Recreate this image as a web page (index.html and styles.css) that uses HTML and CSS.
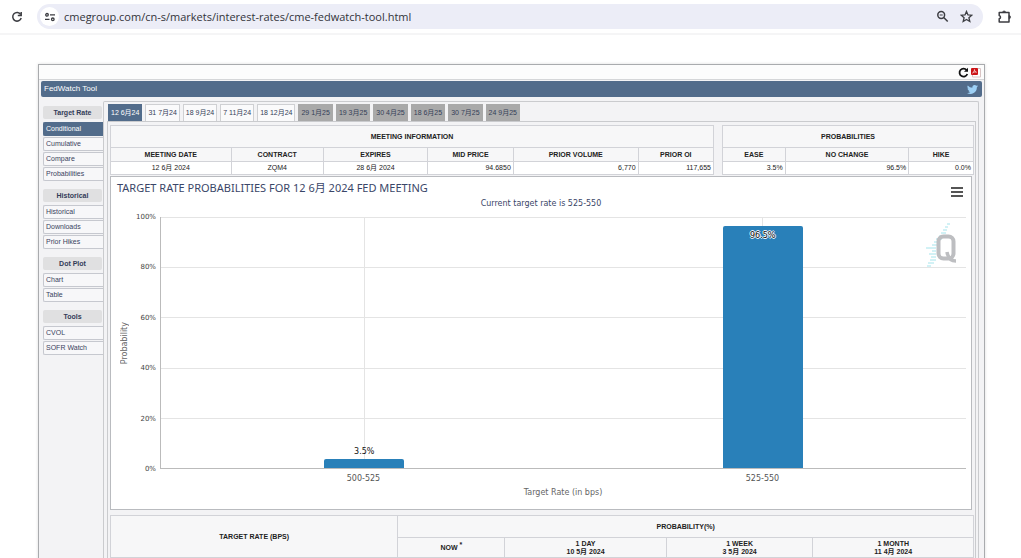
FILE: index.html
```html
<!DOCTYPE html>
<html lang="zh-CN">
<head>
<meta charset="utf-8">
<meta name="viewport" content="width=device-width, initial-scale=1">
<title>CME FedWatch Tool</title>
<link rel="stylesheet" href="styles.css">
</head>
<body>
<header class="browser">
  <button class="icon-btn" aria-label="Reload"><svg width="12" height="12" viewBox="0 0 12 12" fill="none" stroke="#3c3d42" stroke-width="1.5"><path d="M9.7 3.5A4.3 4.3 0 1 0 10.2 7"/><path d="M10.2 1v3.4H6.8"/></svg></button>
  <div class="omnibox">
    <button class="site-info" aria-label="Site information"><svg width="12" height="12" viewBox="0 0 12 12" fill="none" stroke="#3c3d42" stroke-width="1.3"><circle cx="3" cy="3.8" r="1.3"/><path d="M6 3.8h5M1 8.3h4.5"/><circle cx="8.8" cy="8.3" r="1.3"/></svg></button>
    <input class="url" type="text" aria-label="Address" value="cmegroup.com/cn-s/markets/interest-rates/cme-fedwatch-tool.html">
    <button class="icon-btn" aria-label="Zoom"><svg width="13" height="13" viewBox="0 0 13 13" fill="none" stroke="#3c3d42" stroke-width="1.5"><circle cx="5.2" cy="5" r="3.4"/><path d="M7.7 7.5l4 4"/><path d="M3.7 5h3" stroke-width="1"/></svg></button>
    <button class="icon-btn" aria-label="Bookmark"><svg width="13" height="13" viewBox="0 0 13 13" fill="none" stroke="#3c3d42" stroke-width="1.3"><path d="M6.5 1.4l1.5 3.5 3.8.3-2.9 2.5.9 3.8-3.3-2-3.3 2 .9-3.8L1.2 5.2l3.8-.3z"/></svg></button>
  </div>
  <button class="icon-btn" aria-label="Extensions"><svg width="15" height="15" viewBox="0 0 15 15" fill="none" stroke="#3c3d42" stroke-width="1.5"><path d="M2.2 3.5H12V13H2.2V9.8a1.7 1.7 0 0 0 0-3.3z" stroke-linejoin="round"/><path d="M5.500 3.500a1.600 1.600 0 0 1 3.200 0zM12 6.500a1.600 1.600 0 0 1 0 3.200z" fill="#3c3d42" stroke-width=".6"/></svg></button>
</header>

<main class="page">
  <section class="tool">
    <div class="toolbar">
      <button class="icon-btn" aria-label="Refresh"><svg width="11" height="11" viewBox="0 0 11 11" fill="none" stroke="#111" stroke-width="1.8"><path d="M8.6 3A4 4 0 1 0 9.3 7"/><path d="M10 .8v4H6z" fill="#111" stroke="none"/></svg></button>
      <button class="icon-btn" aria-label="PDF"><svg width="11" height="11" viewBox="0 0 11 11"><path d="M3.5 1.5h6v8.500h-8V6" fill="#fff" stroke="#d9c4c4"/><rect width="7" height="7" x="0" y="1" rx="1" fill="#cc1417"/><path d="M1.5 6c2-1 2-3.500 2-3.500s0 2.500 2 2.700c-1.500-.4-3 0-4 .8z" fill="none" stroke="#fff" stroke-width=".6"/></svg></button>
    </div>
    <div class="titlebar">
      <h1>FedWatch Tool</h1>
      <a href="#" aria-label="Twitter"><svg width="11" height="11" viewBox="0 0 24 24" fill="#9dd0f5"><path d="M24 4.600a10 10 0 0 1-2.800.8 5 5 0 0 0 2.200-2.700c-1 .5-2 1-3.100 1.200a4.900 4.900 0 0 0-8.400 4.500A14 14 0 0 1 1.700 3.100a4.900 4.900 0 0 0 1.500 6.600 5 5 0 0 1-2.200-.6 4.900 4.900 0 0 0 4 4.800 5 5 0 0 1-2.200.1 4.900 4.900 0 0 0 4.600 3.400A9.900 9.900 0 0 1 0 19.500 14 14 0 0 0 21.500 7.100 10 10 0 0 0 24 4.600z"/></svg></a>
    </div>
    <div class="body">
      <nav class="sidebar">
        <h2>Target Rate</h2>
        <ul>
          <li><a class="on" href="#">Conditional</a></li>
          <li><a href="#">Cumulative</a></li>
          <li><a href="#">Compare</a></li>
          <li><a href="#">Probabilities</a></li>
        </ul>
        <h2>Historical</h2>
        <ul>
          <li><a href="#">Historical</a></li>
          <li><a href="#">Downloads</a></li>
          <li><a href="#">Prior Hikes</a></li>
        </ul>
        <h2>Dot Plot</h2>
        <ul>
          <li><a href="#">Chart</a></li>
          <li><a href="#">Table</a></li>
        </ul>
        <h2>Tools</h2>
        <ul>
          <li><a href="#">CVOL</a></li>
          <li><a href="#">SOFR Watch</a></li>
        </ul>
      </nav>
      <div class="content">
        <div class="tabs">
          <button class="tab on">12 6月24</button>
          <button class="tab">31 7月24</button>
          <button class="tab">18 9月24</button>
          <button class="tab">7 11月24</button>
          <button class="tab">18 12月24</button>
          <button class="tab far">29 1月25</button>
          <button class="tab far">19 3月25</button>
          <button class="tab far">30 4月25</button>
          <button class="tab far">18 6月25</button>
          <button class="tab far">30 7月25</button>
          <button class="tab far">24 9月25</button>
        </div>
        <div class="view">
          <div class="summary">
            <table class="grid meeting">
              <colgroup><col class="c-date"><col class="c-contract"><col class="c-expires"><col class="c-price"><col class="c-volume"><col class="c-oi"></colgroup>
              <thead>
                <tr class="caption"><th colspan="6">MEETING INFORMATION</th></tr>
                <tr><th>MEETING DATE</th><th>CONTRACT</th><th>EXPIRES</th><th>MID PRICE</th><th>PRIOR VOLUME</th><th>PRIOR OI</th></tr>
              </thead>
              <tbody>
                <tr><td>12 6月 2024</td><td>ZQM4</td><td>28 6月 2024</td><td class="num">94.6850</td><td class="num">6,770</td><td class="num">117,655</td></tr>
              </tbody>
            </table>
            <table class="grid odds">
              <colgroup><col class="c-ease"><col class="c-same"><col class="c-hike"></colgroup>
              <thead>
                <tr class="caption"><th colspan="3">PROBABILITIES</th></tr>
                <tr><th>EASE</th><th>NO CHANGE</th><th>HIKE</th></tr>
              </thead>
              <tbody>
                <tr><td class="num">3.5%</td><td class="num">96.5%</td><td class="num">0.0%</td></tr>
              </tbody>
            </table>
          </div>

          <figure class="chart">
            <div class="chart-head">
              <h3>TARGET RATE PROBABILITIES FOR 12 6月 2024 FED MEETING</h3>
              <button class="icon-btn" aria-label="Chart menu"><svg width="12" height="10" viewBox="0 0 12 10" stroke="#555" stroke-width="2"><path d="M0 1h12M0 5h12M0 9h12"/></svg></button>
            </div>
            <p class="subtitle">Current target rate is 525-550</p>
            <div class="chart-body">
              <div class="y-title"><span>Probability</span></div>
              <div class="y-axis"><span>100%</span><span>80%</span><span>60%</span><span>40%</span><span>20%</span><span>0%</span></div>
              <div class="plot">
                <div class="lines"><i></i><i></i><i></i><i></i><i></i></div>
                <div class="mark"><svg width="34" height="46" viewBox="0 0 34 46" fill="none"><path d="M22 1h3M20 4h3M18 7h4M16 10h5M14 13h6M11 16h6M9 19h6M7 22h5M1 25h10M7 28h4M4 31h7M6 34h5M5 37h6M3 40h6M2 43h4" stroke="#a5e4ec"/><rect x="13.500" y="13.500" width="15" height="22" rx="5" stroke="#bdbec1" stroke-width="4"/><path d="M22 29c1 6 4 9 9 9" stroke="#bdbec1" stroke-width="3.500"/></svg></div>
                <div class="cat"><div class="bar" style="height:3.5%"><b class="above">3.5%</b></div></div>
                <div class="cat"><div class="bar" style="height:96.5%"><b class="inside">96.5%</b></div></div>
              </div>
              <div class="x-axis"><span>500-525</span><span>525-550</span></div>
              <div class="x-title">Target Rate (in bps)</div>
            </div>
          </figure>

          <table class="grid history">
            <colgroup><col class="c-rate"><col class="c-now"><col class="c-day"><col class="c-week"><col class="c-month"></colgroup>
            <thead>
              <tr class="caption"><th rowspan="2">TARGET RATE (BPS)</th><th colspan="4">PROBABILITY(%)</th></tr>
              <tr class="dates"><th>NOW <sup>*</sup></th><th>1 DAY<br>10 5月 2024</th><th>1 WEEK<br>3 5月 2024</th><th>1 MONTH<br>11 4月 2024</th></tr>
            </thead>
          </table>
        </div>
      </div>
    </div>
  </section>
</main>
</body>
</html>
```

FILE: styles.css
```css
* { box-sizing: border-box; }
body {
  margin: 0;
  height: 100vh;
  display: flex;
  flex-direction: column;
  overflow: hidden;
  background: #fff;
  color: #222;
  font: 7px/8px "Liberation Sans", "Noto Sans CJK SC", sans-serif;
}
h1, h2, h3, p, ul, figure { margin: 0; padding: 0; }
ul { list-style: none; }
a { color: inherit; text-decoration: none; }
button { border: 0; padding: 0; margin: 0; background: none; font: inherit; color: inherit; }
svg { display: block; }
.icon-btn { flex: none; }

/* browser bar */
.browser {
  flex: none;
  display: flex;
  align-items: center;
  gap: 14px;
  padding: 4px 9px 4px 11px;
  border-bottom: 2px solid #f5f5f6;
}
.omnibox {
  flex: 1;
  display: flex;
  align-items: center;
  gap: 11px;
  height: 25px;
  padding: 0 10px 0 3px;
  border-radius: 13px;
  background: #ecedf7;
}
.site-info {
  display: grid;
  place-items: center;
  width: 19px;
  height: 19px;
  border-radius: 50%;
  background: #fff;
}
.url {
  flex: 1;
  min-width: 0;
  margin-left: -6px;
  padding: 0;
  border: 0;
  background: none;
  color: #33343a;
  font: 11px/16px "Open Sans", "Noto Sans", sans-serif;
}

/* tool frame */
.page { flex: 1; min-height: 0; overflow: hidden; padding: 29px 36px 0 38px; }
.tool {
  border: 1px solid #a9abae;
  background: #f3f3f5;
  box-shadow: 0 0 3px #ddd;
}
.toolbar {
  display: flex;
  justify-content: flex-end;
  align-items: center;
  gap: 2px;
  height: 15px;
  padding-right: 2px;
  border-bottom: 1px solid #d5d6d8;
  background: #fcfcfc;
}
.titlebar {
  display: flex;
  justify-content: space-between;
  align-items: center;
  height: 16px;
  margin: 1px 2px 0;
  padding: 0 4px 0 3px;
  border-radius: 2px;
  background: #526c8b;
  color: #fff;
}
.titlebar h1 { font-size: 8px; font-weight: 400; }
.body { display: flex; padding: 4px 5px 0 4px; }

/* sidebar */
.sidebar { flex: none; width: 60px; padding-top: 5px; color: #3a4360; }
.sidebar h2 {
  margin: 0 1px 3px 0;
  border-radius: 2px;
  background: #e0e0e1;
  color: #333c58;
  font-size: 7px;
  line-height: 13px;
  text-align: center;
}
.sidebar ul { display: grid; gap: 1px; margin-bottom: 8px; }
.sidebar a {
  display: block;
  padding-left: 2px;
  border: 1px solid #c6c8cf;
  border-right: 0;
  border-radius: 2px 0 0 2px;
  background: #f7f7f9;
  line-height: 12px;
}
.sidebar .on { border-color: #526c8b; background: #526c8b; color: #fff; }

/* content */
.content {
  flex: 1;
  min-width: 0;
  padding: 2px 2px 0 3px;
  border: 1px solid #cacbce;
  border-bottom: 0;
  border-radius: 2px 2px 0 0;
}
.tabs { display: flex; gap: 3px; padding-left: 1px; }
.tab {
  padding: 0 2px;
  border: 1px solid #cfd0d3;
  border-bottom: 0;
  background: #fafafb;
  color: #344058;
  line-height: 16px;
}
.tab.on { border-color: #526c8b; background: #526c8b; color: #fff; }
.tab.far { border-color: #a9a9a9; background: #a9a9a9; }
.view { padding: 3px 1px 12px 2px; border: 1px solid #cacbce; border-bottom: 0; }
.summary { display: grid; grid-template-columns: 604fr 252fr; gap: 8px; margin-bottom: 1px; }

.grid { width: 100%; border-collapse: collapse; table-layout: fixed; background: #fff; }
.grid th, .grid td { padding: 0 2px; border: 1px solid #d2d3d8; text-align: center; }
.grid th { height: 14px; background: #f7f7f8; }
.grid td { height: 13px; }
.grid .num { text-align: right; }
.grid .caption th { height: 22px; }
.grid .dates th { height: 20px; }
.grid sup { font-size: 7px; line-height: 0; }
.c-date { width: 20%; }
.c-contract { width: 15.3%; }
.c-expires { width: 17.3%; }
.c-price { width: 14.2%; }
.c-volume { width: 20.7%; }
.c-oi { width: 12.5%; }
.c-ease { width: 25%; }
.c-same { width: 49.2%; }
.c-hike { width: 25.8%; }
.c-rate { width: 33.3%; }
.c-now { width: 12.4%; }
.c-day { width: 18.7%; }
.c-week { width: 17%; }
.c-month { width: 18.6%; }

/* chart */
.chart {
  margin: 0 2px 5px 0;
  border: 1px solid #b9bbbf;
  background: #fff;
  color: #555;
  font: 8px/10px "DejaVu Sans", sans-serif;
}
.chart-head { display: flex; justify-content: space-between; align-items: flex-end; padding: 2px 8px 0 6px; }
.chart-head h3 {
  color: #3a4668;
  font: 400 11px/18px "Noto Sans", "Noto Sans CJK SC", sans-serif;
}
.subtitle { margin-top: 2px; color: #3a4668; text-align: center; }
.chart-body {
  display: grid;
  grid-template: 252px 20px 20px / 21px 28px 1fr;
  padding: 8px 5px 0 0;
}
.y-title { display: grid; place-items: center; padding-left: 6px; }
.y-title span { writing-mode: vertical-rl; transform: rotate(180deg); color: #666; }
.y-axis {
  display: flex;
  flex-direction: column;
  justify-content: space-between;
  margin: -5px 4px -5px 0;
  color: #444;
  font-size: 7px;
  text-align: right;
}
.plot {
  position: relative;
  display: grid;
  grid-template-columns: 1fr 1fr;
  padding: 0 4px;
  border-left: 1px solid #bbb;
  border-bottom: 1px solid #bbb;
}
.lines { position: absolute; inset: 0; display: grid; }
.lines i { border-top: 1px solid #e4e4e4; }
.mark { position: absolute; top: 6px; right: 7px; }
.cat {
  position: relative;
  display: flex;
  justify-content: center;
  align-items: flex-end;
  background: linear-gradient(#e4e4e4, #e4e4e4) center / 1px 100% no-repeat;
}
.bar { width: 20%; border-radius: 2px 2px 0 0; background: #2980b9; text-align: center; }
.bar b { display: block; color: #111; font-weight: 400; }
.bar .above { margin-top: -12px; }
.bar .inside {
  margin-top: 5px;
  text-shadow: 1px 0 #fff, -1px 0 #fff, 0 1px #fff, 0 -1px #fff;
}
.x-axis {
  grid-column: 3;
  display: grid;
  grid-template-columns: 1fr 1fr;
  padding: 5px 4px 0;
  text-align: center;
}
.x-title { grid-column: 3; text-align: center; color: #666; line-height: 8px; }
```
